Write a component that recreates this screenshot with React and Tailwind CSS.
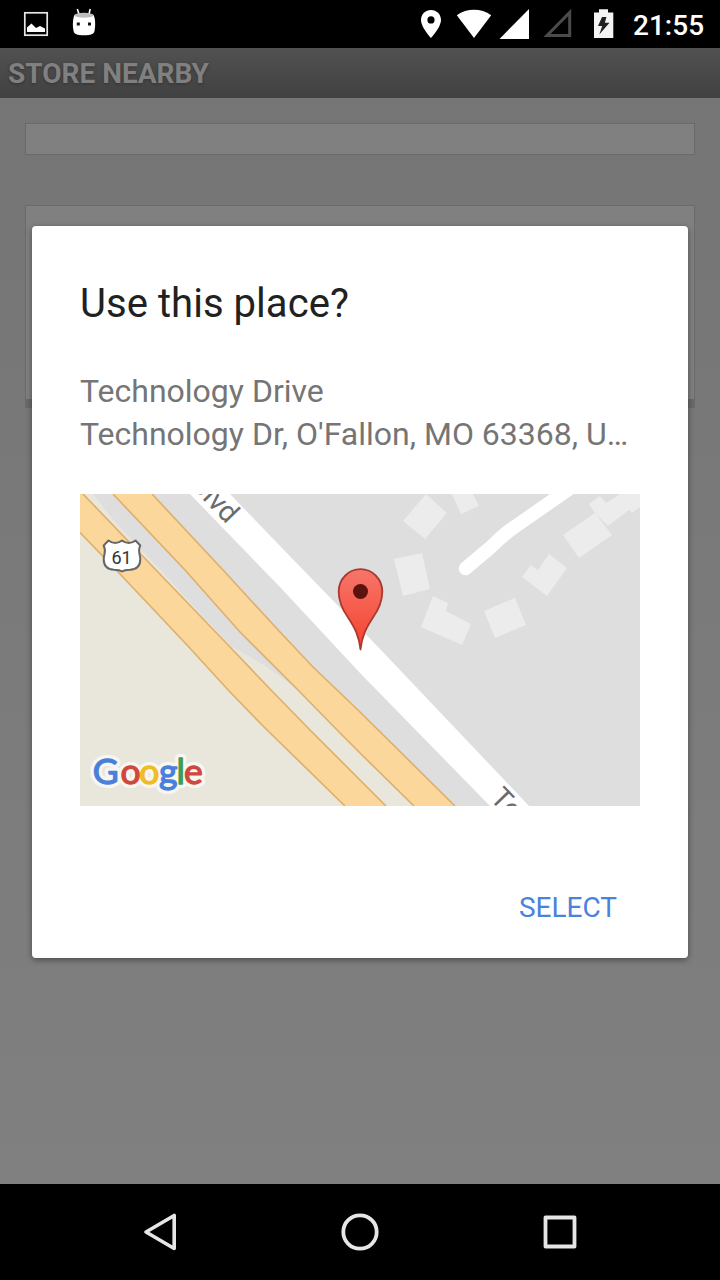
const highwayEdge = '#deb06c';

function StatusBar() {
  return (
    <div className="flex h-12 shrink-0 items-center justify-between bg-black text-white">
      <svg className="h-12 w-60" viewBox="0 0 240 48">
        <rect x="24.8" y="12.8" width="22.4" height="22.4" fill="none" stroke="#e6e6e6" strokeWidth="1.7" />
        <path d="M27 32V27.5L31.5 23.5L36 28L40 26L45 28.5V32Z" fill="#fff" />
        <path d="M77.3 9L79.3 15M90.2 9L88.8 15" stroke="#fff" strokeWidth="1.6" />
        <path d="M74.5 15C73 18 72.3 25 73.6 31C74.2 34.3 77 35.2 84 35.2S93.8 34.3 94.5 31C95.8 25 95.2 18 93.5 15C90 12.5 78 12.5 74.5 15Z" fill="#fff" />
        <ellipse cx="84" cy="15.3" rx="9.5" ry="2.5" fill="#bcbcbc" />
        <rect x="76.8" y="22.5" width="3" height="3" fill="#111" />
        <rect x="88" y="22.5" width="3" height="3" fill="#111" />
      </svg>
      <div className="flex h-12 items-center">
        <svg className="h-12 w-[210px]" viewBox="410 0 210 48">
          <path fillRule="evenodd" d="M431 10C425.3 10 421 14.3 421 20C421 27.3 431 38 431 38S441 27.3 441 20C441 14.3 436.7 10 431 10ZM431 16.3A3.6 3.6 0 1 1 431 23.5A3.6 3.6 0 1 1 431 16.3Z" fill="#fff" />
          <path d="M456.8 15.3C467 8 481 8 491.2 15.3L474 38Z" fill="#fff" />
          <path d="M499.5 39H529V9Z" fill="#fff" />
          <path d="M547 35.5H569.7V12.5Z" fill="none" stroke="#4b4b4b" strokeWidth="3" />
          <path d="M594 12.5H599V9.3H608V12.5H613.3V38H594Z" fill="#f4f4f4" />
          <path d="M602 17H606.5L604.8 22.7H609.5L599.3 34.5L602.2 26H598Z" fill="#202020" />
        </svg>
        <div className="w-[100px] pt-1 pl-[13px] text-[28px] leading-none font-medium">21:55</div>
      </div>
    </div>
  );
}

function Shield() {
  return (
    <g>
      <path
        d="M28.5 46.5C33 50 38 49.5 42 46.5C46 49.5 51 50 55.5 46.5L60.3 51.5C57.5 57 60 60 60.3 65C60.3 72.5 56.5 75.5 50 75.7C46 75.7 44 76 42 77.5C40 76 38 75.7 34 75.7C27.5 75.5 23.7 72.5 23.7 65C24 60 26.5 57 23.7 51.5Z"
        fill="#fff" stroke="#666" strokeWidth="2" strokeLinejoin="round"
      />
      <text x="41.5" y="69.5" textAnchor="middle" fontSize="18" fill="#333">61</text>
    </g>
  );
}

const logoLetters = [
  ['G', 12.8, '#4a80dc'],
  ['o', 40.5, '#d0483d'],
  ['o', 59.3, '#eebd24'],
  ['g', 79, '#4a80dc'],
  ['l', 96.6, '#3d9d55'],
  ['e', 104, '#d0483d'],
];

function GoogleLogo() {
  return (
    <g fontFamily="Lato, sans-serif" fontSize="35.5" strokeLinejoin="round">
      {logoLetters.map(([c, x], i) => (
        <text key={i} x={x} y="289.5" fill="#f7f6f1" stroke="#f7f6f1" strokeWidth="8">{c}</text>
      ))}
      {logoLetters.map(([c, x, color], i) => (
        <text key={i} x={x} y="289.5" fill={color} stroke={color} strokeWidth="1.3">{c}</text>
      ))}
    </g>
  );
}

function MapPreview() {
  return (
    <svg className="block h-[312px] w-[560px]" viewBox="0 0 560 312">
      <defs>
        <linearGradient id="pin" x1="0" y1="0" x2="0" y2="1">
          <stop offset="0" stopColor="#f7766a" />
          <stop offset="1" stopColor="#f5412c" />
        </linearGradient>
      </defs>
      <rect width="560" height="312" fill="#dedede" />
      <path d="M0 0H13L35 28L83 79L117 116L151 152L187 173L217 195L240 218L354 312H0Z" fill="#e9e7dc" />
      <g fill="#fcd79c">
        <path d="M0 0H3L76 76L150 153L190 195L230 236L280 286L306 312H265L183 232L150 198L107 151L40 80L0 38.5Z" />
        <path d="M33 0H72L143 76L200 138L233 173L280 218L375 312H334L280 259L263 242L217 195L160 138L105 76Z" />
      </g>
      <g fill="none" stroke={highwayEdge} strokeWidth="1.7">
        <path d="M0 38.5L40 80L107 151L150 198L183 232L265 312" />
        <path d="M3 0L76 76L150 153L190 195L230 236L280 286L306 312" />
        <path d="M33 0L105 76L160 138L217 195L263 242L280 259L334 312" />
        <path d="M72 0L143 76L200 138L233 173L280 218L375 312" />
      </g>
      <path d="M110 0H150L200 52L301 156L449 312H410L280 179L200 93Z" fill="#fff" />
      <g fill="#ececec">
        <path d="M346 0L367 19L345 45L323 27Z" />
        <path d="M314 65L342 59L350 95L323 102Z" />
        <path d="M353 102L368 109L366 117L391 130L382 151L341 133Z" />
        <path d="M372 0H393L399 12L381 20Z" />
        <path d="M404 117L435 104L446 131L415 144Z" />
        <path d="M442 83L451 71L458 76L469 60L487 74L467 102Z" />
        <path d="M483 41L515 19L532 41L499 64Z" />
        <path d="M509 10L520 2L526 9L540 0H560V13L552 19L549 16L528 32L515 19Z" />
      </g>
      <path d="M385.5 74.5L411 53Q425 39 436 32L489 -5" fill="none" stroke="#fff" strokeWidth="13.5" strokeLinecap="round" />
      <g fill="#6b6b6b" fontSize="28.5">
        <text transform="translate(147 30.5) rotate(46)" textAnchor="end">Blvd</text>
        <text transform="translate(409 305) rotate(46)">Te</text>
      </g>
      <Shield />
      <path
        d="M280.5 155.5C279 142 275 134 268 123.5C262 115 258.7 107 258.7 97.5A21.8 22.3 0 0 1 302.3 97.5C302.3 107 299 115 293 123.5C286 134 282 142 280.5 155.5Z"
        fill="url(#pin)" stroke="#a83a31" strokeWidth="1.8" strokeLinejoin="round"
      />
      <circle cx="280.5" cy="97.5" r="7.5" fill="#5c120e" />
      <GoogleLogo />
    </svg>
  );
}

function NavBar() {
  return (
    <div className="flex h-24 shrink-0 items-center justify-center gap-[152px] bg-black">
      <svg className="size-12" viewBox="0 0 48 48" fill="none" stroke="#e6e6e6" strokeWidth="3.6" strokeLinejoin="round">
        <path d="M38.2 7.5V40.5L10 24Z" />
      </svg>
      <svg className="size-12" viewBox="0 0 48 48" fill="none" stroke="#e6e6e6" strokeWidth="3.8">
        <circle cx="24" cy="24" r="16.7" />
      </svg>
      <svg className="size-12" viewBox="0 0 48 48" fill="none" stroke="#e6e6e6" strokeWidth="3.8" strokeLinejoin="round">
        <rect x="9.5" y="9.5" width="29" height="29" />
      </svg>
    </div>
  );
}

export default function App() {
  return (
    <div className="relative flex h-[1280px] w-[720px] flex-col overflow-hidden bg-black font-['Roboto',sans-serif]">
      <StatusBar />
      <header className="flex h-[50px] shrink-0 items-center bg-linear-to-b from-[#515151] to-[#414141] pt-0.5 pl-2 text-[28px] leading-none font-bold text-[#808080] [text-shadow:0_1px_3px_#333]">
        STORE NEARBY
      </header>
      <main className="flex flex-1 flex-col gap-[50px] bg-linear-to-b from-[#757575] to-[#808080] px-[25px] pt-[25px]">
        <div className="h-8 border border-[#6a6a6a] bg-[#808080]" />
        <div className="h-[203px] border border-b-[9px] border-[#6a6a6a] bg-[#808080]" />
      </main>
      <NavBar />
      <section className="absolute top-[226px] left-8 flex h-[732px] w-[656px] flex-col rounded-[4px] bg-white px-12 pt-[54px] shadow-[0_2px_6px_rgba(0,0,0,0.4)]">
        <h1 className="text-[40px] leading-[47px] tracking-[0.05px] text-[#212121]">Use this place?</h1>
        <div className="mt-[43px] text-[32px] leading-[43px] text-[#757575]">
          <p>Technology Drive</p>
          <p className="whitespace-nowrap">Technology Dr, O'Fallon, MO 63368, U…</p>
        </div>
        <div className="mt-[38px]">
          <MapPreview />
        </div>
        <button className="mt-[85px] mr-[23px] self-end text-[28px] leading-[33px] text-[#4a83db]">SELECT</button>
      </section>
    </div>
  );
}
